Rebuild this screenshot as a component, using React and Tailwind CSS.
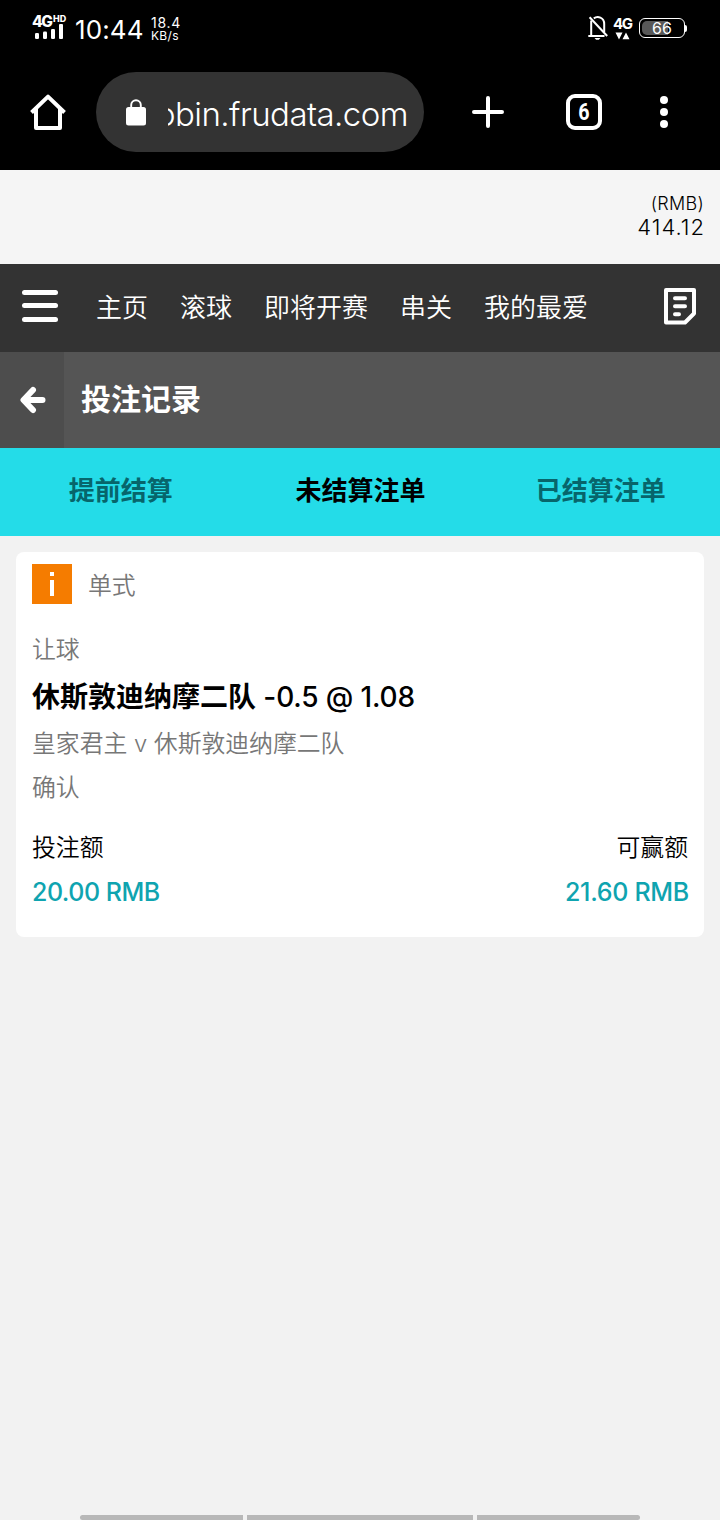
import React from "react";

function SignalIcon() {
  return (
    <svg width="28" height="15" viewBox="0 0 28 15" fill="white">
      <rect x="0" y="9" width="4" height="6" rx="1.3" />
      <rect x="8" y="7.5" width="4" height="7.5" rx="1.3" />
      <rect x="16" y="5" width="4" height="10" rx="1.3" />
      <rect x="24" y="0" width="4" height="15" rx="1" />
    </svg>
  );
}

function StatusBar() {
  return (
    <div className="flex h-14 shrink-0 text-white">
      <div className="relative ml-8 mt-[14px] h-7 w-[35px]">
        <div className="flex items-start">
          <span className="w-[21px] text-[15.5px] font-extrabold leading-[15px] tracking-[-1.3px]">4G</span>
          <span className="text-[9px] font-extrabold leading-[9px] tracking-[-0.1px]">HD</span>
        </div>
        <div className="absolute left-[3px] top-[10px]">
          <SignalIcon />
        </div>
      </div>
      <div className="ml-[8px] mt-[14px] w-[76px] whitespace-nowrap text-[26px] leading-8 tracking-[0.1px]">10:44</div>
      <div className="mt-4 w-10 text-[13px] leading-[13px]">
        <div className="text-[14px] tracking-[0.7px]">18.4</div>
        <div className="text-[12px] tracking-[0.3px]">KB/s</div>
      </div>
      <div className="ml-auto flex pr-[33px]">
        <svg className="mt-[15px]" width="20" height="26" viewBox="0 0 20 26" fill="none" stroke="white" strokeWidth="2">
          <path d="M3.2 5.5 V20.6 M0.3 21 H16.5 M5.8 3.4 C9.5 0.6 16.2 2.2 16.2 9 V17" />
          <path d="M1.6 2.3 L19.2 21" />
          <path d="M6.5 23 H12.5 L10.8 24.8 H8.2 Z" fill="white" stroke="none" />
        </svg>
        <div className="ml-[5px] mt-4 w-[19px]">
          <div className="text-[15px] font-bold leading-[15px] tracking-[-1.4px]">4G</div>
          <svg width="18" height="8" viewBox="0 0 18 8" fill="white" className="ml-[2px] mt-[1px]">
            <path d="M0.5 0.5 H7.5 L4 7.5 Z M7.5 7.2 L11 0.5 L14.5 7.2 Z" />
          </svg>
        </div>
        <div className="relative ml-[7px] mt-[18px] flex h-5 w-[46px] items-center justify-center overflow-hidden rounded-[6px] border border-white">
          <div className="absolute left-[2px] top-[2px] h-[14px] w-[26px] rounded-l-[5px] bg-[#585858]" />
          <span className="relative text-[16px] leading-5">66</span>
        </div>
        <div className="mt-[25px] h-[7px] w-[2px] rounded-r-sm bg-white" />
      </div>
    </div>
  );
}

function BrowserBar() {
  return (
    <div className="flex h-[114px] shrink-0 pt-4 text-white">
      <div className="flex h-20 w-24 items-center justify-center">
        <svg width="36" height="36" viewBox="0 0 36 36" fill="none" stroke="white" strokeWidth="4" strokeLinejoin="round">
          <path d="M1.5 18.5 L18 2.6 L34.5 18.5" />
          <path d="M6 15 V34 H30 V15" />
        </svg>
      </div>
      <div className="flex h-20 w-[328px] items-center rounded-full bg-[#333333]">
        <svg className="ml-[30px]" width="20" height="27" viewBox="0 0 20 27">
          <path d="M5.2 10 V6 A4.8 4.8 0 0 1 14.8 6 V10" fill="none" stroke="white" strokeWidth="1.9" />
          <rect x="0" y="8" width="20" height="18.5" rx="2.5" fill="white" />
        </svg>
        <div className="ml-[22px] mt-[3px] flex w-[240px] justify-end overflow-hidden whitespace-nowrap text-[33px] font-[350] leading-[44px] tracking-[-0.55px]">
          <span>obin.frudata.com</span>
        </div>
      </div>
      <div className="ml-[24px] flex h-20 w-20 items-center justify-center">
        <svg width="32" height="32" viewBox="0 0 32 32" stroke="white" strokeWidth="4" strokeLinecap="round">
          <path d="M16 2 V30 M2 16 H30" />
        </svg>
      </div>
      <div className="ml-4 flex h-20 w-20 items-center justify-center">
        <div className="flex h-9 w-9 items-center justify-center rounded-[9px] border-4 border-white">
          <span className="font-['Roboto',sans-serif] text-[24px] font-bold leading-6 scale-x-[0.82]">6</span>
        </div>
      </div>
      <div className="flex h-20 w-20 flex-col items-center justify-center gap-1">
        <div className="h-2 w-2 rounded-full bg-white" />
        <div className="h-2 w-2 rounded-full bg-white" />
        <div className="h-2 w-2 rounded-full bg-white" />
      </div>
    </div>
  );
}

function NavBar() {
  return (
    <nav className="flex h-[88px] shrink-0 items-center bg-[#333333] text-[26px] font-[350] text-white">
      <div className="ml-[22px] mt-[-5px] flex w-9 flex-col gap-[8.5px]">
        <div className="h-[5px] rounded-full bg-white" />
        <div className="h-[5px] rounded-full bg-white" />
        <div className="h-[5px] rounded-full bg-white" />
      </div>
      <div className="-mt-px ml-[38px] flex gap-8 whitespace-nowrap leading-10">
        <span>主页</span>
        <span>滚球</span>
        <span>即将开赛</span>
        <span>串关</span>
        <span>我的最爱</span>
      </div>
      <svg className="-mt-[4px] ml-auto mr-6" width="32" height="37" viewBox="0 0 32 37" fill="none" stroke="white" strokeWidth="4" strokeLinejoin="round">
        <path d="M2 2 H30 V25.5 L21 34.5 H2 Z" />
        <path d="M11 10.3 H21 M11 18.3 H21 M11 26.3 H15" strokeLinecap="round" />
      </svg>
    </nav>
  );
}

export default function App() {
  return (
    <div className="flex h-[1520px] w-[720px] flex-col overflow-hidden bg-[#f2f2f2] font-['Inter','Noto_Sans_CJK_SC',sans-serif]">
      <header className="flex shrink-0 flex-col bg-black">
        <StatusBar />
        <BrowserBar />
      </header>
      <div className="h-[94px] shrink-0 bg-[#f5f5f5] pr-4 pt-[22px] text-right font-[350] text-black">
        <div className="text-[18px] leading-6 tracking-[0.3px]">(RMB)</div>
        <div className="-mt-px -mr-px text-[22px] leading-6 tracking-[1px]">414.12</div>
      </div>
      <NavBar />
      <div className="flex h-24 shrink-0 bg-[#555555] text-white">
        <div className="flex w-16 items-center justify-center bg-[#4d4d4d] pl-px">
          <svg width="26" height="28" viewBox="0 0 26 28" fill="none" stroke="white" strokeWidth="6" strokeLinecap="round" strokeLinejoin="round">
            <path d="M13 4 L3.5 14 L13 24 M4 14 H22.5" />
          </svg>
        </div>
        <h1 className="ml-[17px] mt-[-2px] self-center text-[30px] font-bold leading-10">投注记录</h1>
      </div>
      <div className="grid h-[88px] shrink-0 grid-cols-3 items-center bg-[#24dce8] pb-[2px] pl-px text-center text-[26px] font-bold leading-10 text-[#07656b]">
        <span>提前结算</span>
        <span className="text-black">未结算注单</span>
        <span className="pl-px">已结算注单</span>
      </div>
      <main className="mx-4 mt-4 h-[385px] shrink-0 rounded-lg bg-white px-4 pt-[11.5px] text-[23.85px] font-[350] text-[#777777]">
        <div className="flex h-10 items-center">
          <div className="flex h-10 w-10 flex-col items-center gap-[4px] bg-[#f57c00] pt-[8px]">
            <div className="h-[4px] w-1 bg-white" />
            <div className="h-[16px] w-1 bg-white" />
          </div>
          <span className="ml-4 mt-1">单式</span>
        </div>
        <div className="mt-[26.5px] h-[41px] leading-10">让球</div>
        <div className="h-[52px] whitespace-nowrap text-[28px] leading-[53px] text-black">
          <span className="font-bold">休斯敦迪纳摩二队</span>
          <span className="font-medium tracking-[-0.15px]"> -0.5 @ 1.08</span>
        </div>
        <div className="h-[43px] whitespace-nowrap leading-[42px] tracking-[-0.03px]">皇家君主 v 休斯敦迪纳摩二队</div>
        <div className="h-11 leading-[43px]">确认</div>
        <div className="mt-4 flex h-11 justify-between leading-[43px] text-black">
          <span>投注额</span>
          <span>可赢额</span>
        </div>
        <div className="-mr-px flex h-11 justify-between text-[25px] font-medium leading-[44px] tracking-[-0.5px] text-[#0fa4b0]">
          <span>20.00 RMB</span>
          <span className="tracking-[-0.3px]">21.60 RMB</span>
        </div>
      </main>
      <div className="mt-auto flex h-[5px] shrink-0 justify-center gap-1">
        <div className="w-[163px] rounded-l-full bg-[#b8b8b8]" />
        <div className="w-[226px] bg-[#b8b8b8]" />
        <div className="w-[163px] rounded-r-full bg-[#b8b8b8]" />
      </div>
    </div>
  );
}
